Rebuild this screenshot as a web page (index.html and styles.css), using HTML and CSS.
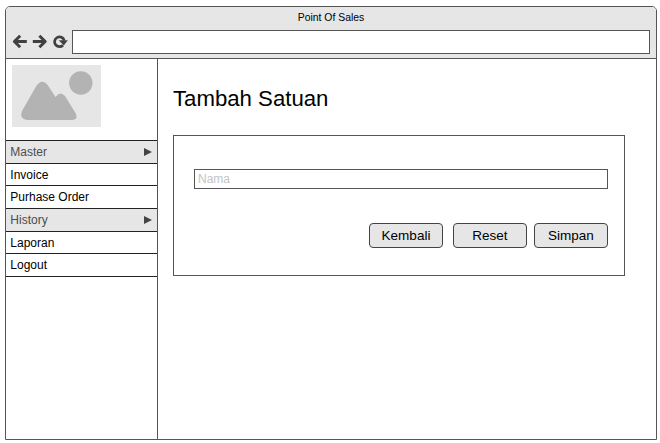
FILE: index.html
```
<!DOCTYPE html>
<html lang="id">
<head>
<meta charset="utf-8">
<title>Point Of Sales</title>
<link rel="stylesheet" href="styles.css">
</head>
<body>
<div class="window">
  <header class="chrome">
    <div class="title">Point Of Sales</div>
    <div class="toolbar">
      <svg class="nav-icons" width="60" height="24" viewBox="0 0 60 24" fill="none" stroke="#3f4042" stroke-width="3" stroke-linejoin="round">
        <path d="M14.800 11.500H3M8.200 5.800L2.400 11.500l5.800 5.700"/>
        <path d="M20.800 11.500h12M27.400 5.800l5.800 5.700-5.800 5.700"/>
        <path d="M51 15.200A4.900 4.900 0 1 1 52.200 10.500" stroke-width="2.700"/>
        <path d="M46.800 10.200h9l-4 5.200z" fill="#3f4042" stroke="none"/>
      </svg>
      <div class="address"></div>
    </div>
  </header>
  <div class="body">
    <aside class="sidebar">
      <div class="logo">
        <svg width="89" height="62" viewBox="0 0 89 62" fill="#b3b3b3">
          <circle cx="68.800" cy="18" r="11.700"/>
          <path d="M10 46L24 21.500Q30 12.500 36 20.500L43.500 32Q48 25.500 53 31L63.800 48.500Q66.500 54.500 60 55H15Q7 54 10 46Z"/>
        </svg>
      </div>
      <nav class="menu">
        <div class="item group">Master<span class="arrow"></span></div>
        <div class="item short">Invoice</div>
        <div class="item">Purhase Order</div>
        <div class="item group">History<span class="arrow"></span></div>
        <div class="item short">Laporan</div>
        <div class="item">Logout</div>
      </nav>
    </aside>
    <main class="content">
      <h1>Tambah Satuan</h1>
      <form class="card">
        <input class="field" type="text" placeholder="Nama">
        <div class="actions">
          <button type="button">Kembali</button>
          <button type="button">Reset</button>
          <button type="button" class="save">Simpan</button>
        </div>
      </form>
    </main>
  </div>
</div>
</body>
</html>
```
FILE: styles.css
```
* { box-sizing: border-box; }
body {
  margin: 0;
  padding: 6px 0 0 5px;
  background: #fff;
  color: #000;
  font-family: "Liberation Sans", Arial, sans-serif;
  font-size: 12px;
}
.window {
  display: flex;
  flex-direction: column;
  width: 652px;
  height: 434px;
  border: 1px solid #555;
  border-radius: 5px 5px 0 0;
}
.chrome {
  height: 52px;
  background: #e6e6e6;
  border-bottom: 1px solid #555;
  border-radius: 4px 4px 0 0;
}
.title {
  height: 23px;
  line-height: 21px;
  font-size: 10.400px;
  text-align: center;
}
.toolbar {
  display: flex;
  padding-left: 6px;
}
.nav-icons { display: block; }
.address {
  width: 578px;
  height: 24px;
  border: 1px solid #555;
  background: #fff;
}
.body {
  display: flex;
  flex: 1;
}
.sidebar {
  width: 152px;
  border-right: 1px solid #555;
}
.logo {
  width: 89px;
  height: 62px;
  margin: 6px 0 13px 6px;
  background: #e6e6e6;
}
.logo svg { display: block; }
.menu { border-top: 1px solid #222; }
.item {
  display: flex;
  align-items: center;
  justify-content: space-between;
  height: 23px;
  padding: 0 5px 0 4.300px;
  border-bottom: 1px solid #222;
}
.item.short { height: 22px; }
.item.group {
  background: #e6e6e6;
  color: #4d4d4d;
}
.arrow {
  border: solid transparent;
  border-width: 4.500px 0 4.500px 8px;
  border-left-color: #444;
}
.content {
  flex: 1;
  padding: 27px 0 0 15px;
}
h1 {
  margin: 0;
  height: 49px;
  font-size: 22.200px;
  font-weight: 400;
  line-height: 26px;
}
.card {
  width: 452px;
  height: 141px;
  padding: 33px 16px 0 20px;
  border: 1px solid #555;
}
.field {
  display: block;
  width: 414px;
  height: 20px;
  padding: 0 3px;
  border: 1px solid #555;
  border-radius: 0;
  font: 12px "Liberation Sans", Arial, sans-serif;
}
.field::placeholder { color: #c4c4c4; }
.actions {
  display: flex;
  justify-content: flex-end;
  gap: 10px;
  margin-top: 34px;
}
button {
  width: 74px;
  height: 25px;
  padding: 0;
  border: 1px solid #444;
  border-radius: 4px;
  background: #e6e6e6;
  color: #000;
  font: 13.500px "Liberation Sans", Arial, sans-serif;
}
.save { margin-left: -3px; }
```
